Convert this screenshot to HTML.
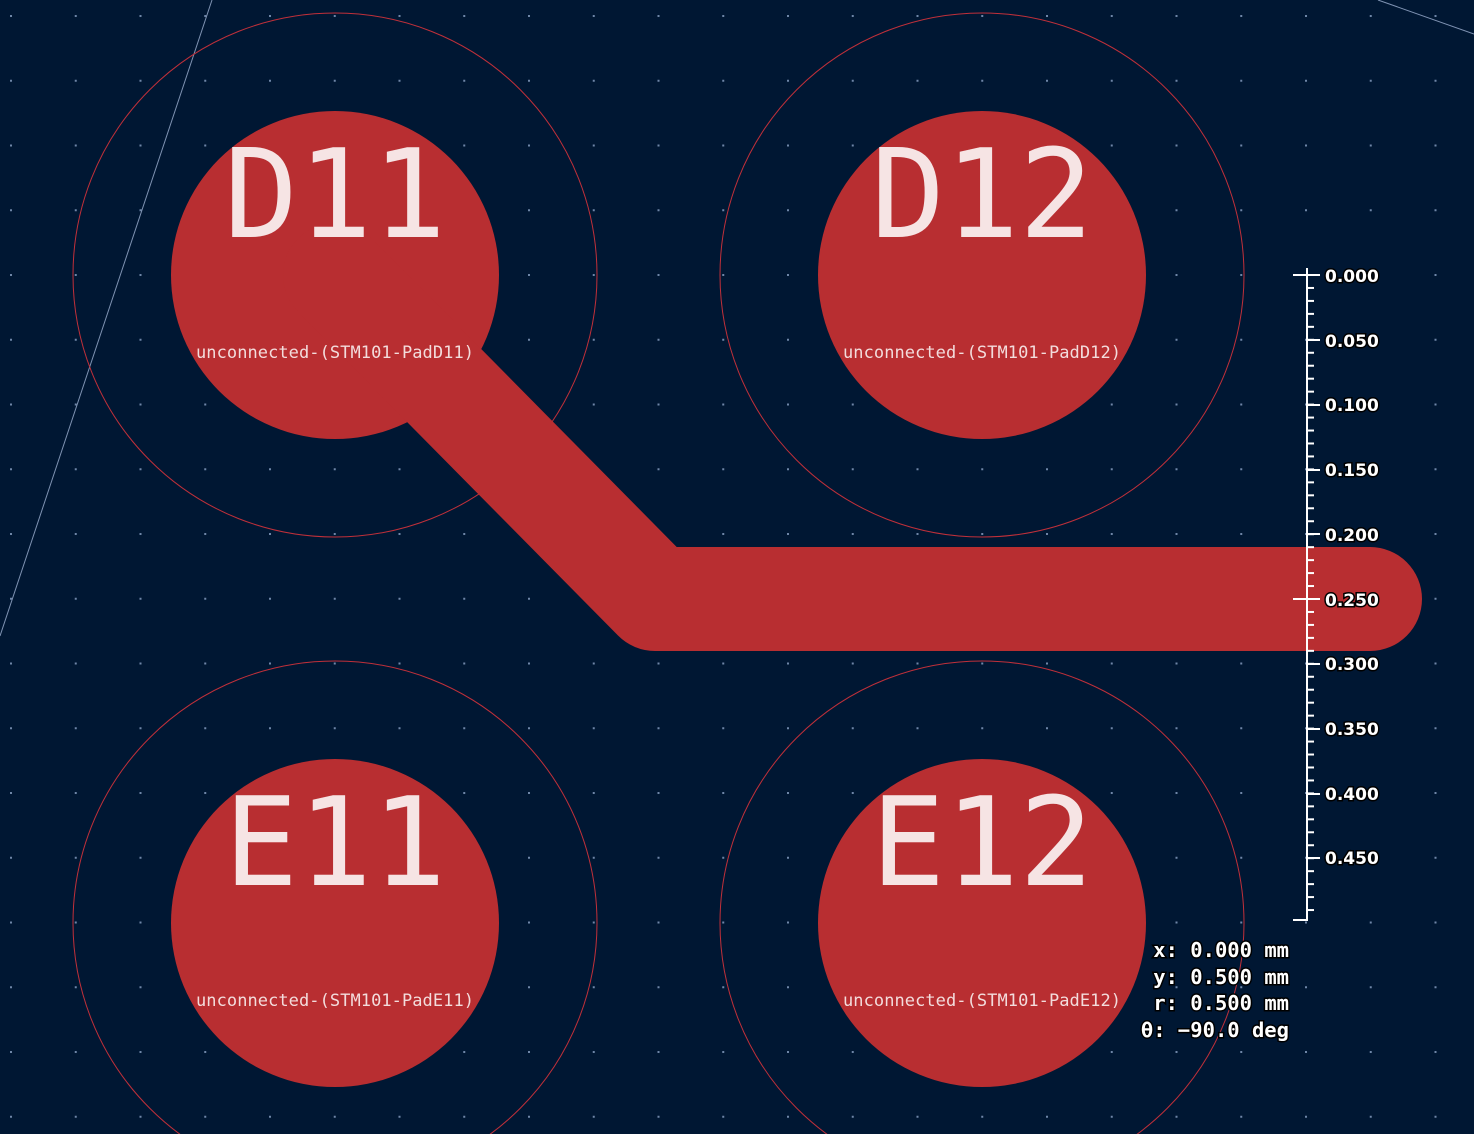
<!DOCTYPE html>
<html><head><meta charset="utf-8"><style>
html,body{margin:0;padding:0;background:#001733;width:1474px;height:1134px;overflow:hidden}
svg{display:block}
.big{font-family:"DejaVu Sans Mono","Liberation Mono",monospace;font-size:123px;fill:#f6e4e4}
.sm{font-family:"DejaVu Sans Mono","Liberation Mono",monospace;font-size:17px;fill:#f3dcdc}
.rl{font-family:"DejaVu Sans","Liberation Sans",sans-serif;font-size:17px;font-weight:bold;fill:#fff;stroke:#000;stroke-width:3px;paint-order:stroke}
.co{font-family:"DejaVu Sans Mono","Liberation Mono",monospace;font-size:20.5px;font-weight:bold;fill:#fff;stroke:#000;stroke-width:3px;paint-order:stroke}
</style></head><body>
<svg width="1474" height="1134" viewBox="0 0 1474 1134" xmlns="http://www.w3.org/2000/svg">
<defs>
<pattern id="g" x="10" y="15" width="64.75" height="64.75" patternUnits="userSpaceOnUse">
<rect x="0" y="0" width="2" height="2" fill="#6f86a8"/>
</pattern>
<pattern id="t" x="1307" y="274" width="20" height="12.96" patternUnits="userSpaceOnUse">
<rect x="0" y="0" width="7" height="2" fill="#fff"/>
</pattern>
</defs>
<rect width="1474" height="1134" fill="#001733"/>
<rect width="1474" height="1134" fill="url(#g)"/>
<line x1="212" y1="0" x2="0" y2="636" stroke="#7f93b3" stroke-width="1"/>
<line x1="1378" y1="0" x2="1474" y2="34" stroke="#7f93b3" stroke-width="1"/>
<g fill="none" stroke="#c0303a" stroke-width="1">
<circle cx="335" cy="275" r="262"/><circle cx="982" cy="275" r="262"/>
<circle cx="335" cy="923" r="262"/><circle cx="982" cy="923" r="262"/>
</g>
<g fill="#b82e31">
<circle cx="335" cy="275" r="164"/><circle cx="982" cy="275" r="164"/>
<circle cx="335" cy="923" r="164"/><circle cx="982" cy="923" r="164"/>
</g>
<polyline points="335,275 655,599 1370,599" fill="none" stroke="#b82e31" stroke-width="104" stroke-linecap="round" stroke-linejoin="round"/>
<text class="big" x="224" y="237">D11</text>
<text class="big" x="871" y="237">D12</text>
<text class="big" x="224" y="885">E11</text>
<text class="big" x="871" y="885">E12</text>
<text class="sm" x="196" y="358" textLength="278">unconnected-(STM101-PadD11)</text>
<text class="sm" x="843" y="358" textLength="278">unconnected-(STM101-PadD12)</text>
<text class="sm" x="196" y="1006" textLength="278">unconnected-(STM101-PadE11)</text>
<text class="sm" x="843" y="1006" textLength="278">unconnected-(STM101-PadE12)</text>
<rect x="1306" y="268" width="2" height="653" fill="#fff"/>
<rect x="1307" y="274" width="7" height="646" fill="url(#t)"/>
<g fill="#fff">
<rect x="1293" y="274" width="27" height="2"/>
<rect x="1293" y="598" width="27" height="2"/>
<rect x="1293" y="919" width="15" height="2"/>
<rect x="1307" y="339" width="13" height="2"/><rect x="1307" y="404" width="13" height="2"/>
<rect x="1307" y="469" width="13" height="2"/><rect x="1307" y="533" width="13" height="2"/>
<rect x="1307" y="663" width="13" height="2"/><rect x="1307" y="728" width="13" height="2"/>
<rect x="1307" y="793" width="13" height="2"/><rect x="1307" y="857" width="13" height="2"/>
</g>
<g class="rl">
<text x="1325" y="282">0.000</text><text x="1325" y="347">0.050</text>
<text x="1325" y="411">0.100</text><text x="1325" y="476">0.150</text>
<text x="1325" y="541">0.200</text><text x="1325" y="606">0.250</text>
<text x="1325" y="670">0.300</text><text x="1325" y="735">0.350</text>
<text x="1325" y="800">0.400</text><text x="1325" y="864">0.450</text>
</g>
<g class="co" text-anchor="end">
<text x="1289" y="957">x: 0.000 mm</text>
<text x="1289" y="984">y: 0.500 mm</text>
<text x="1289" y="1010">r: 0.500 mm</text>
<text x="1289" y="1037">θ: −90.0 deg</text>
</g>
</svg>
</body></html>
